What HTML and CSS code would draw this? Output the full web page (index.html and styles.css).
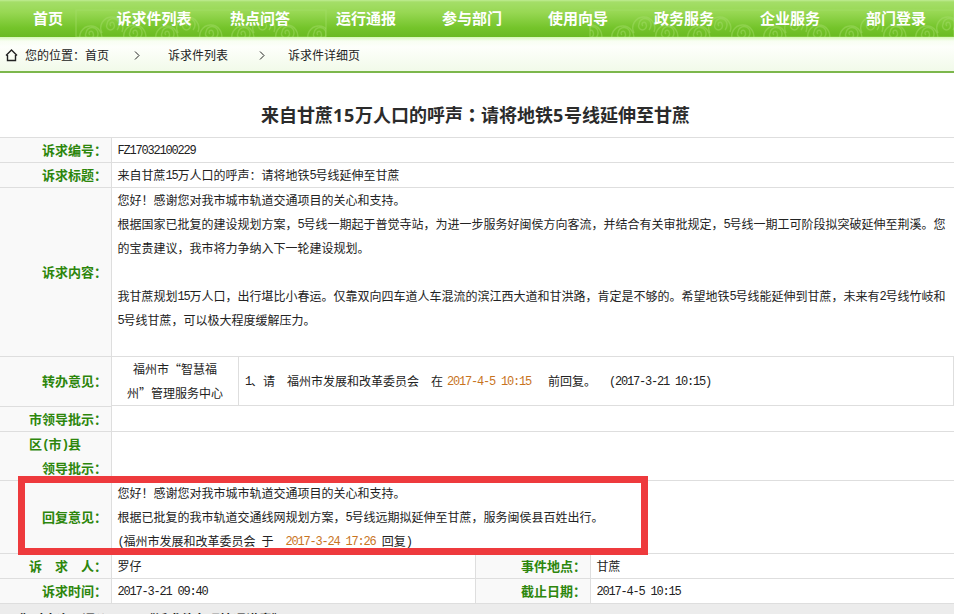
FILE: index.html
```html
<!DOCTYPE html>
<html lang="zh-CN">
<head>
    <meta charset="UTF-8">
    <title>诉求件详细页</title>
    <link rel="stylesheet" href="styles.css">
</head>
<body>

    <div class="nav">
        <svg class="nav-bg" width="954" height="37">
            <defs>
                <g id="swirl">
                    <path d="M0 1 a2 2 0 1 1 3 -2 a4 4 0 1 1 -7 0 a6 6 0 0 1 12 1 a8 8 0 0 1 -2 5"/>
                    <path d="M-9 8 a11 11 0 1 1 20 -1"/>
                </g>
                <pattern id="cloud" width="76" height="37" patternUnits="userSpaceOnUse">
                    <use href="#swirl" x="14" y="34"/>
                    <use href="#swirl" x="35" y="25"/>
                    <use href="#swirl" x="58" y="33"/>
                </pattern>
            </defs>
            <rect x="76" y="10" width="250" height="27" fill="url(#cloud)"/>
            <rect x="590" y="10" width="364" height="27" fill="url(#cloud)"/>
        </svg>
        <ul>
            <li>首页</li>
            <li>诉求件列表</li>
            <li>热点问答</li>
            <li>运行通报</li>
            <li>参与部门</li>
            <li>使用向导</li>
            <li>政务服务</li>
            <li>企业服务</li>
            <li>部门登录</li>
        </ul>
    </div>

    <div class="crumb">
        <svg class="home" width="14" height="13" viewBox="0 0 14 13">
            <path d="M1 6.5 L6.5 1 L12 6.5 M2.5 6 V11.5 H10.5 V6"/>
        </svg>
        <span>您的位置：首页</span>
        <svg class="arrow" width="6" height="9" viewBox="0 0 6 9"><path d="M1 .5 L5 4.5 L1 8.5"/></svg>
        <span>诉求件列表</span>
        <svg class="arrow last" width="6" height="9" viewBox="0 0 6 9"><path d="M1 .5 L5 4.5 L1 8.5"/></svg>
        <span>诉求件详细页</span>
    </div>

    <h1>来自甘蔗<i>15</i>万人口的呼声<b lang="zh-TW">：</b>请将地铁<i>5</i>号线延伸至甘蔗</h1>

    <div class="detail">
        <div class="row">
            <div class="label">诉求编号：</div>
            <div class="value"><i>FZ17032100229</i></div>
        </div>
        <div class="row">
            <div class="label">诉求标题：</div>
            <div class="value">来自甘蔗<i>15</i>万人口的呼声：请将地铁<i>5</i>号线延伸至甘蔗</div>
        </div>
        <div class="row content">
            <div class="label">诉求内容：</div>
            <div class="value">
                您好！感谢您对我市城市轨道交通项目的关心和支持。<br>
                根据国家已批复的建设规划方案，<i>5</i>号线一期起于普觉寺站，为进一步服务好闽侯方向客流，并结合有关审批规定，<i>5</i>号线一期工可阶段拟突破延伸至荆溪。您<br>
                的宝贵建议，我市将力争纳入下一轮建设规划。<br>
                <br>
                我甘蔗规划<i>15</i>万人口，出行堪比小春运。仅靠双向四车道人车混流的滨江西大道和甘洪路，肯定是不够的。希望地铁<i>5</i>号线能延伸到甘蔗，未来有<i>2</i>号线竹岐和<br>
                <i>5</i>号线甘蔗，可以极大程度缓解压力。<br>
            </div>
        </div>
        <div class="row transfer">
            <div class="label">转办意见：</div>
            <div class="inner">
                <div class="dept">福州市“智慧福<br>州”管理服务中心</div>
                <div class="opinion"><i>1</i>、请　福州市发展和改革委员会　在<em><i>2017-4-5 10:15</i></em>前回复。<i class="date">(2017-3-21 10:15)</i></div>
            </div>
        </div>
        <div class="row">
            <div class="label">市领导批示：</div>
            <div class="value"></div>
        </div>
        <div class="row county">
            <div class="label"><span>区<i>(</i>市<i>)</i>县</span>领导批示：</div>
            <div class="value"></div>
        </div>
        <div class="row reply">
            <div class="label">回复意见：</div>
            <div class="value">
                您好！感谢您对我市城市轨道交通项目的关心和支持。<br>
                根据已批复的我市轨道交通线网规划方案，<i>5</i>号线远期拟延伸至甘蔗，服务闽侯县百姓出行。<br>
                <i>(</i>福州市发展和改革委员会<i> </i>于<i>  </i><em class="plain"><i>2017-3-24 17:26</i></em><i> </i>回复<i>)</i>
            </div>
            <div class="mark"></div>
        </div>
        <div class="row">
            <div class="label">诉　求　人：</div>
            <div class="value">罗仔</div>
            <div class="label second">事件地点：</div>
            <div class="value place">甘蔗</div>
        </div>
        <div class="row">
            <div class="label">诉求时间：</div>
            <div class="value"><i>2017-3-21 09:40</i></div>
            <div class="label second">截止日期：</div>
            <div class="value place"><i>2017-4-5 10:15</i></div>
        </div>
    </div>

    <div class="footer">
        <span>您对本次</span>
        <span>评价：</span>
        <span>《诉求件办理情况满意》</span>
    </div>

</body>
</html>
```

FILE: styles.css
```css
* {
    box-sizing: border-box;
}

body {
    margin: 0;
    height: 614px;
    overflow: hidden;
    background: #fff;
    color: #222;
    font: 12px/24px "Noto Sans CJK SC", sans-serif;
    white-space: nowrap;
}

/* half-width characters take half of a full-width one */
i {
    font-family: "Liberation Mono", monospace;
    font-style: normal;
    line-height: 1;
    letter-spacing: -1.2px;
    white-space: pre;
    vertical-align: 1px;
}

em {
    margin: 0 17px 0 4px;
    font-style: normal;
    color: #c8741e;
}

em.plain {
    margin: 0;
}

.date {
    margin-left: 13px;
}

.nav {
    position: relative;
    height: 37px;
    background: linear-gradient(#c0ec94 0, #a4de68 2px, #98d854 12px, #74c42a 28px, #6aba22 37px);
}

.nav-bg {
    position: absolute;
    left: 0;
    top: 0;
    fill: none;
    stroke: #a6de6c;
    stroke-opacity: .45;
    stroke-width: 1.4;
}

.nav ul {
    position: relative;
    display: flex;
    margin: 0 0 0 -5px;
    padding: 0;
    list-style: none;
}

.nav li {
    flex: 0 0 106px;
    color: #fff;
    font-size: 15px;
    font-weight: bold;
    line-height: 36px;
    text-align: center;
}

.crumb {
    display: flex;
    align-items: center;
    height: 36px;
    padding: 2px 0 0 5px;
    border-bottom: 2px solid #7cb74c;
    background: linear-gradient(#d6f8b4 0, #f8fef2 4px, #fdfffb 10px, #f1fae9 100%);
}

.crumb svg {
    fill: none;
    stroke: #222;
}

.home {
    margin-right: 6px;
    stroke-width: 1.4;
}

.arrow {
    margin: 0 28px 0 25px;
}

.arrow.last {
    margin: 0 23px 0 31px;
}

h1 {
    margin: 0;
    height: 64px;
    padding-top: 21px;
    padding-right: 3px;
    color: #2b2b2b;
    font-size: 18px;
    line-height: 40px;
    text-align: center;
}

h1 i {
    font-family: "Open Sans", sans-serif;
    letter-spacing: .7px;
    vertical-align: baseline;
}

h1 b {
    font-family: "Noto Sans CJK TC", sans-serif;
    line-height: 1;
}

.detail {
    border-top: 1px solid #dedede;
}

.row {
    position: relative;
    display: flex;
    height: 25px;
    border-bottom: 1px solid #dedede;
}

.label {
    display: flex;
    flex-direction: column;
    flex: 0 0 112px;
    align-items: flex-end;
    justify-content: center;
    padding-right: 4px;
    border-right: 1px solid #dedede;
    background: #f9f9f9;
    color: #2d860c;
    font-size: 13px;
    font-weight: bold;
}

.label i {
    letter-spacing: -1.3px;
}

.value {
    flex: 1;
    padding-left: 5.5px;
}

.content {
    height: 169px;
}

.transfer {
    height: 50px;
    border-bottom: none;
}

.transfer .label {
    padding-bottom: 1px;
    border-bottom: 1px solid #dedede;
}

.inner {
    display: flex;
    flex: 1;
    height: 49px;
    border-right: 1px solid #dedede;
    border-bottom: 1px solid #dedede;
}

.dept {
    width: 127px;
    border-right: 1px solid #dedede;
    text-align: center;
}

.opinion {
    padding-left: 6px;
    line-height: 48px;
}

.county {
    height: 49px;
}

.county span {
    margin-right: 26px;
}

.reply {
    height: 73px;
}

/* red frame over the reply */
.mark {
    position: absolute;
    left: 18px;
    top: -5px;
    width: 630px;
    height: 79px;
    border: 7px solid #ee3a3d;
    z-index: 1;
}

.second {
    flex-basis: 116px;
    border-left: 1px solid #dedede;
}

.place {
    flex: 0 0 363px;
}

.footer {
    display: flex;
    gap: 12px;
    height: 20px;
    padding: 3px 0 0 18px;
    background: #ececec;
    font-size: 13px;
    font-weight: bold;
}

.footer span:last-child {
    margin-left: 9px;
}
```
